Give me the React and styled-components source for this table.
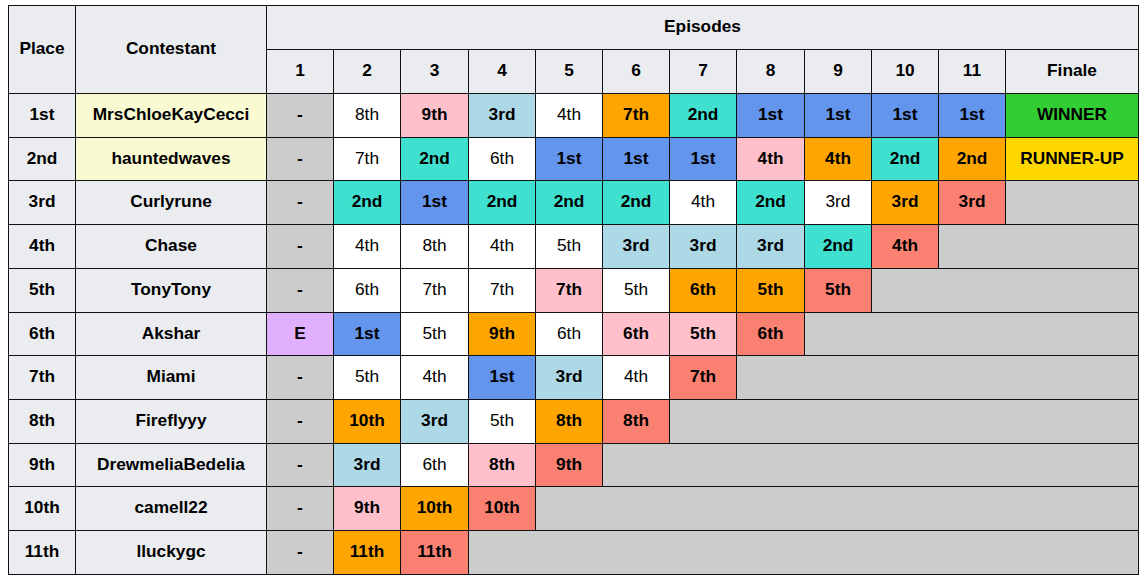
import React from "react";
import styled, { createGlobalStyle } from "styled-components";

const GlobalStyle = createGlobalStyle`
  html, body {
    margin: 0;
    padding: 0;
    background: #fff;
  }
  body {
    padding: 5px 8px;
    font-family: "Liberation Sans", Arial, sans-serif;
    color: #000;
  }
`;

const COLORS = {
  w: "#ffffff",
  b: "#6495ed",
  t: "#40e0d0",
  lb: "#add8e6",
  p: "#ffc0cb",
  o: "#ffa500",
  s: "#fa8072",
  g: "#cccccc",
  e: "#e0b0ff",
  win: "#32cd32",
  run: "#ffd700",
};

const widths = [67, 191, 67, 67, 68, 67, 67, 67, 67, 68, 67, 67, 67, 133];

const rows = [
  {
    place: "1st", name: "MrsChloeKayCecci", hl: true,
    eps: [["-", "g"], ["8th", "w"], ["9th", "p"], ["3rd", "lb"], ["4th", "w"], ["7th", "o"], ["2nd", "t"], ["1st", "b"], ["1st", "b"], ["1st", "b"], ["1st", "b"], ["WINNER", "win"]],
  },
  {
    place: "2nd", name: "hauntedwaves", hl: true,
    eps: [["-", "g"], ["7th", "w"], ["2nd", "t"], ["6th", "w"], ["1st", "b"], ["1st", "b"], ["1st", "b"], ["4th", "p"], ["4th", "o"], ["2nd", "t"], ["2nd", "o"], ["RUNNER-UP", "run"]],
  },
  {
    place: "3rd", name: "Curlyrune",
    eps: [["-", "g"], ["2nd", "t"], ["1st", "b"], ["2nd", "t"], ["2nd", "t"], ["2nd", "t"], ["4th", "w"], ["2nd", "t"], ["3rd", "w"], ["3rd", "o"], ["3rd", "s"]],
  },
  {
    place: "4th", name: "Chase",
    eps: [["-", "g"], ["4th", "w"], ["8th", "w"], ["4th", "w"], ["5th", "w"], ["3rd", "lb"], ["3rd", "lb"], ["3rd", "lb"], ["2nd", "t"], ["4th", "s"]],
  },
  {
    place: "5th", name: "TonyTony",
    eps: [["-", "g"], ["6th", "w"], ["7th", "w"], ["7th", "w"], ["7th", "p"], ["5th", "w"], ["6th", "o"], ["5th", "o"], ["5th", "s"]],
  },
  {
    place: "6th", name: "Akshar",
    eps: [["E", "e"], ["1st", "b"], ["5th", "w"], ["9th", "o"], ["6th", "w"], ["6th", "p"], ["5th", "p"], ["6th", "s"]],
  },
  {
    place: "7th", name: "Miami",
    eps: [["-", "g"], ["5th", "w"], ["4th", "w"], ["1st", "b"], ["3rd", "lb"], ["4th", "w"], ["7th", "s"]],
  },
  {
    place: "8th", name: "Fireflyyy",
    eps: [["-", "g"], ["10th", "o"], ["3rd", "lb"], ["5th", "w"], ["8th", "o"], ["8th", "s"]],
  },
  {
    place: "9th", name: "DrewmeliaBedelia",
    eps: [["-", "g"], ["3rd", "lb"], ["6th", "w"], ["8th", "p"], ["9th", "s"]],
  },
  {
    place: "10th", name: "camell22",
    eps: [["-", "g"], ["9th", "p"], ["10th", "o"], ["10th", "s"]],
  },
  {
    place: "11th", name: "lluckygc",
    eps: [["-", "g"], ["11th", "o"], ["11th", "s"]],
  },
];

const Table = styled.table`
  width: 1130px;
  table-layout: fixed;
  border-collapse: collapse;
  font-size: 17.3px;
  line-height: 1.15;
`;

const HeadCell = styled.th`
  background: #eaecf0;
  border: 1px solid #111;
  font-weight: bold;
  text-align: center;
  padding: 0 0 1px;
`;

const HeadRow = styled.tr`
  height: 44px;
`;

const Row = styled.tr`
  height: 43.73px;
`;

const NameCell = styled.td`
  background: ${(p) => (p.$hl ? "#fafad2" : "#eaecf0")};
  border: 1px solid #111;
  font-weight: bold;
  text-align: center;
  padding: 0 0 1px;
`;

const Cell = styled.td`
  background: ${(p) => COLORS[p.$tone]};
  border: 1px solid #111;
  font-weight: ${(p) => (p.$tone === "w" ? "normal" : "bold")};
  text-align: center;
  padding: 0 0 1px;
  white-space: nowrap;
`;

const Empty = styled.td`
  background: #cccccc;
  border: 1px solid #111;
  padding: 0;
`;

export default function App() {
  return (
    <>
      <GlobalStyle />
      <Table>
        <colgroup>
          {widths.map((w, i) => (
            <col key={i} style={{ width: w }} />
          ))}
        </colgroup>
        <thead>
          <HeadRow>
            <HeadCell rowSpan={2}>Place</HeadCell>
            <HeadCell rowSpan={2}>Contestant</HeadCell>
            <HeadCell colSpan={12}>Episodes</HeadCell>
          </HeadRow>
          <HeadRow>
            {Array.from({ length: 11 }, (_, i) => (
              <HeadCell key={i}>{i + 1}</HeadCell>
            ))}
            <HeadCell>Finale</HeadCell>
          </HeadRow>
        </thead>
        <tbody>
          {rows.map((r) => {
            const rest = 12 - r.eps.length;
            return (
              <Row key={r.place}>
                <NameCell>{r.place}</NameCell>
                <NameCell $hl={r.hl}>{r.name}</NameCell>
                {r.eps.map(([text, tone], i) => (
                  <Cell key={i} $tone={tone}>
                    {text}
                  </Cell>
                ))}
                {rest > 0 && <Empty colSpan={rest} />}
              </Row>
            );
          })}
        </tbody>
      </Table>
    </>
  );
}
